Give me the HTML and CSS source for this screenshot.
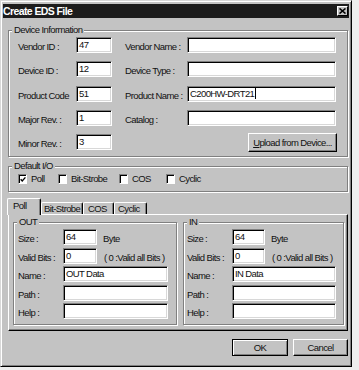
FILE: index.html
```html
<!DOCTYPE html>
<html>
<head>
<meta charset="utf-8">
<title>Create EDS File</title>
<link rel="stylesheet" href="styles.css">
</head>
<body>
<div class="win">
  <div class="titlebar">
    <span class="title">Create EDS File</span>
    <span class="close"><svg width="7" height="6" viewBox="0 0 7 6"><path d="M0.5 0.5L6.5 5.5M6.5 0.5L0.5 5.5" stroke="#000" stroke-width="1.6" fill="none"/></svg></span>
  </div>
  <div class="content">
    <fieldset class="group dev">
      <legend>Device Information</legend>
      <div class="devgrid">
        <span class="lbl">Vendor ID :</span><div class="field fnum">47</div>
        <span class="lbl">Vendor Name :</span><div class="field fname"></div>

        <span class="lbl">Device ID :</span><div class="field fnum">12</div>
        <span class="lbl">Device Type :</span><div class="field fname"></div>

        <span class="lbl">Product Code</span><div class="field fnum">51</div>
        <span class="lbl">Product Name :</span><div class="field fname">C200HW-DRT21<span class="caret"></span></div>

        <span class="lbl">Major Rev. :</span><div class="field fnum">1</div>
        <span class="lbl">Catalog :</span><div class="field fname"></div>

        <span class="lbl">Minor Rev. :</span><div class="field fnum">3</div>
        <div class="btn upload"><span><u>U</u>pload from Device...</span></div>
      </div>
    </fieldset>

    <fieldset class="group defio">
      <legend>Default I/O</legend>
      <div class="checks">
        <div class="chk"><span class="cb"><svg width="7" height="7" viewBox="0 0 7 7"><path d="M0.8 3.2L2.6 5.2L6.3 1" stroke="#000" stroke-width="1.6" fill="none"/></svg></span><span>Poll</span></div>
        <div class="chk"><span class="cb"></span><span>Bit-Strobe</span></div>
        <div class="chk"><span class="cb"></span><span>COS</span></div>
        <div class="chk"><span class="cb"></span><span>Cyclic</span></div>
      </div>
    </fieldset>

    <div class="tabs">
      <div class="tab sel t-poll">Poll</div>
      <div class="tab t-bit">Bit-Strobe</div>
      <div class="tab t-cos">COS</div>
      <div class="tab t-cyc">Cyclic</div>
    </div>
    <div class="panel">
      <fieldset class="group io out">
        <legend>OUT</legend>
        <div class="iogrid">
          <span class="lbl">Size :</span>
          <div class="inrow"><div class="field osmall">64</div><span class="unit">Byte</span></div>
          <span class="lbl">Valid Bits :</span>
          <div class="inrow"><div class="field osmall">0</div><span class="note">( 0 :Valid all Bits )</span></div>
          <span class="lbl">Name :</span><div class="field owide">OUT Data</div>
          <span class="lbl">Path :</span><div class="field owide"></div>
          <span class="lbl">Help :</span><div class="field owide"></div>
        </div>
      </fieldset>
      <fieldset class="group io in">
        <legend>IN</legend>
        <div class="iogrid">
          <span class="lbl">Size :</span>
          <div class="inrow"><div class="field ismall">64</div><span class="unit">Byte</span></div>
          <span class="lbl">Valid Bits :</span>
          <div class="inrow"><div class="field ismall">0</div><span class="note">( 0 :Valid all Bits )</span></div>
          <span class="lbl">Name :</span><div class="field iwide">IN Data</div>
          <span class="lbl">Path :</span><div class="field iwide"></div>
          <span class="lbl">Help :</span><div class="field iwide"></div>
        </div>
      </fieldset>
    </div>

    <div class="actions">
      <div class="btn ok default">OK</div>
      <div class="btn cancel">Cancel</div>
    </div>
  </div>
</div>
</body>
</html>
```

FILE: styles.css
```css
* { box-sizing: border-box; }
html, body { margin: 0; padding: 0; }
body {
  background: #eeeeee;
  font-family: "Liberation Sans", Arial, sans-serif;
  font-size: 9.5px;
  letter-spacing: -0.6px;
  line-height: 12px;
  color: #111;
}
.win {
  width: 352px;
  height: 367px;
  background: #c3c3c3;
  border: 1px solid;
  border-color: #d8d8d8 #000 #000 #d8d8d8;
  box-shadow: inset 1px 1px #fff, inset -1px -1px #808080;
  padding: 3px 2px 2px 2px;
  display: flex;
  flex-direction: column;
}
.titlebar {
  height: 14px;
  background: #1c1c1c;
  display: flex;
  align-items: center;
  justify-content: space-between;
  padding: 0 1px 0 0;
}
.title {
  color: #fff;
  font-weight: bold;
  font-size: 10.5px;
  letter-spacing: -0.6px;
}
.close {
  width: 11px;
  height: 10px;
  background: #c3c3c3;
  border: 1px solid;
  border-color: #fff #000 #000 #fff;
  display: flex;
  align-items: center;
  justify-content: center;
}
.close svg { display: block; }
.content {
  padding: 6px 1px 0 5px;
  display: flex;
  flex-direction: column;
}
.group {
  margin: 0;
  padding: 0;
  min-width: 0;
  border: 1px solid #808080;
  box-shadow: inset 1px 1px #fff, 1px 1px #fff;
}
.group legend {
  margin-left: 3px;
  padding: 0 2px;
  line-height: 12px;
  background: #c3c3c3;
}
.devgrid {
  display: grid;
  grid-template-columns: 58px 49px 62px 149px;
  grid-auto-rows: 16px;
  row-gap: 8.25px;
  padding: 1px 0 6px 9px;
}
.devgrid .lbl { align-self: end; line-height: 13px; white-space: nowrap; }
.field {
  height: 16px;
  background: #fff;
  border: 1px solid;
  border-color: #808080 #fff #fff #808080;
  box-shadow: inset 1px 1px #000, inset -1px -1px #d8d8d8;
  padding: 1px 2px 0 2px;
  line-height: 12px;
  white-space: nowrap;
  overflow: hidden;
  display: flex;
  align-items: flex-start;
}
.fnum { width: 36px; }
.fname { width: 149px; }
.caret {
  display: inline-block;
  width: 1px;
  height: 11px;
  margin-left: 1px;
  background: #000;
}
.btn {
  background: #c3c3c3;
  border: 1px solid;
  border-color: #fff #000 #000 #fff;
  box-shadow: inset -1px -1px #808080;
  display: flex;
  align-items: center;
  justify-content: center;
  white-space: nowrap;
}
.upload {
  grid-column: 3 / 5;
  justify-self: end;
  align-self: start;
  width: 89px;
  height: 19px;
  margin-top: -1px;
  margin-right: -1px;
}
.defio { margin-top: 3px; }
.checks {
  display: grid;
  grid-template-columns: 40px 61px 47px auto;
  padding: 1px 0 6px 9px;
}
.chk { display: flex; align-items: center; gap: 4px; }
.cb {
  width: 9px;
  height: 10px;
  background: #fff;
  border: 1px solid;
  border-color: #808080 #fff #fff #808080;
  box-shadow: inset 1px 1px #000;
  display: flex;
  align-items: center;
  justify-content: center;
}
.cb svg { display: block; margin: 1px 0 0 1px; }
.tabs {
  display: flex;
  align-items: flex-end;
  height: 17px;
  margin-top: 6px;
}
.tab {
  height: 13px;
  background: #c3c3c3;
  border-top: 1px solid #fff;
  border-left: 1px solid #fff;
  border-right: 1px solid #000;
  box-shadow: inset -1px 0 #808080;
  border-radius: 2px 2px 0 0;
  padding-left: 2px;
  line-height: 11px;
  white-space: nowrap;
}
.tab.sel {
  height: 17px;
  position: relative;
  z-index: 1;
  margin-left: -1px;
  padding-left: 5px;
  line-height: 13px;
}
.t-poll { width: 34px; }
.t-bit { width: 42px; }
.t-cos { width: 31px; padding-left: 4px; }
.t-cyc { width: 33px; padding-left: 3px; }
.panel {
  margin-top: -1px;
  border: 1px solid;
  border-color: #fff #000 #000 #fff;
  box-shadow: inset -1px -1px #808080;
  padding: 1px 2px 5px 4px;
  display: grid;
  grid-template-columns: 164px 161px;
  column-gap: 6px;
}
.iogrid {
  display: grid;
  grid-template-columns: 45px auto;
  grid-auto-rows: 16px;
  row-gap: 2.5px;
  padding: 1px 0 5px 4px;
}
.in .iogrid { padding-left: 3px; }
.iogrid .lbl { align-self: end; line-height: 13px; white-space: nowrap; }
.inrow { display: flex; align-items: flex-end; }
.unit { margin-left: 6px; line-height: 13px; }
.note { margin-left: 7px; line-height: 13px; white-space: nowrap; }
.osmall { width: 34px; }
.owide { width: 105px; }
.ismall { width: 33px; }
.iwide { width: 104px; }
.actions {
  display: flex;
  justify-content: flex-end;
  gap: 5px;
  margin-top: 8px;
}
.ok, .cancel { height: 17px; }
.ok { width: 56px; }
.cancel { width: 55px; }
.btn.default {
  border-color: #000;
  box-shadow: inset 1px 1px #fff, inset -1px -1px #808080;
}
```
